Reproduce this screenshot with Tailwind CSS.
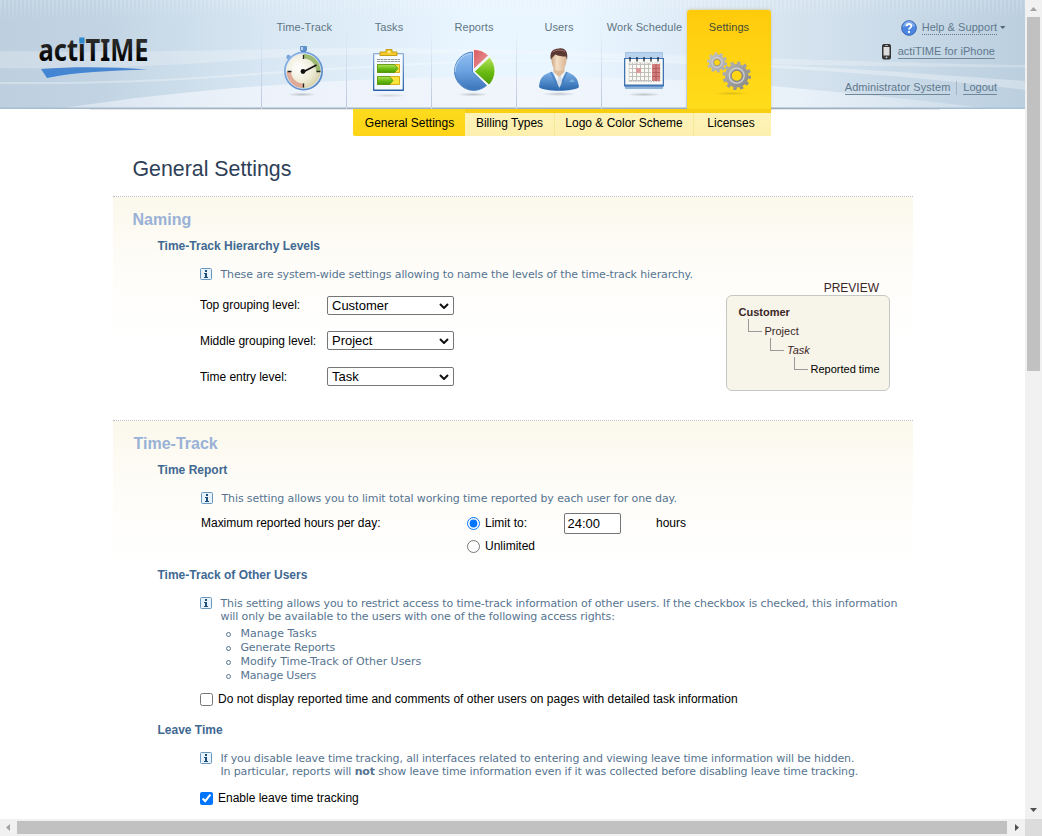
<!DOCTYPE html>
<html lang="en">
<head>
<meta charset="utf-8">
<title>actiTIME - General Settings</title>
<script src="https://cdn.jsdelivr.net/npm/@tailwindcss/browser@4"></script>
</head>
<body class="w-[1042px] h-[836px] overflow-hidden bg-white font-['Liberation_Sans',Arial,sans-serif] text-[12px] text-black grid grid-cols-[1025px_17px] grid-rows-[819px_17px]">

<div class="overflow-hidden">
  <header class="relative h-[109px] flex">
    <!-- header backdrop -->
    <svg class="absolute inset-0" width="1025" height="112" viewBox="0 0 1025 112">
      <defs>
        <linearGradient id="hb"><stop offset="0" stop-color="#bed0df"/><stop offset=".1" stop-color="#c2d4e3"/><stop offset=".26" stop-color="#d8e7f3"/><stop offset=".46" stop-color="#e9f5ff"/><stop offset=".56" stop-color="#e9f5ff"/><stop offset=".78" stop-color="#d5e3ef"/><stop offset="1" stop-color="#bbcfdf"/></linearGradient>
        <linearGradient id="hl"><stop offset="0" stop-color="#a9bfd2"/><stop offset=".25" stop-color="#a0b2c4"/><stop offset=".75" stop-color="#9aabbf"/><stop offset="1" stop-color="#a9c4da"/></linearGradient>
        <linearGradient id="fade" x1="0" x2="0" y1="0" y2="1"><stop offset="0" stop-color="#fff"/><stop offset="1" stop-color="#000"/></linearGradient>
        <pattern id="st" width="4" height="20" patternUnits="userSpaceOnUse"><rect width="2" height="20" fill="#fff" opacity=".2"/></pattern>
        <mask id="fm"><rect width="1025" height="20" fill="url(#fade)"/></mask>
        <linearGradient id="hill"><stop offset="0" stop-color="#e4ecf5" stop-opacity=".6"/><stop offset=".2" stop-color="#ecf2fa"/><stop offset=".5" stop-color="#f1f6fd"/><stop offset=".8" stop-color="#e9f1f9"/><stop offset="1" stop-color="#d5e2ed" stop-opacity=".6"/></linearGradient>
      </defs>
      <rect width="1025" height="108" fill="url(#hb)"/>
      <rect width="1025" height="20" fill="url(#st)" mask="url(#fm)"/>
      <path d="M0 51C120 53 240 50 330 48C520 47 850 63 1025 65V67.500C850 66 660 64 560 55C420 52 350 54 270 58C180 66 90 69 0 68Z" fill="#fff" opacity=".24"/>
      <path d="M0 82C130 83 200 77 270 72C360 66 450 60 530 60C700 58 850 68 1025 81V90C900 74 700 60 530 61.500C450 62 360 68 270 74C200 79 130 85 0 84Z" fill="#fff" opacity=".3"/>
      <path d="M62 108C130 98 200 90 270 85.500C380 77 470 76 540 76.500C640 77 720 82 772 86C850 93 920 100 984 108Z" fill="url(#hill)"/>
      <rect y="107.5" width="1025" height="1.5" fill="url(#hl)"/>
      <rect x="90" y="109" width="850" height="1" fill="#e8e6e4"/>
    </svg>

    <div class="relative w-[262px] pl-[36px] pt-[22px]">
      <svg class="overflow-visible" width="118" height="60" viewBox="36 22 118 60">
        <defs>
          <linearGradient id="lg" gradientUnits="userSpaceOnUse" x1="0" x2="0" y1="38" y2="61"><stop offset="0" stop-color="#2e2e2e"/><stop offset=".55" stop-color="#171717"/><stop offset="1" stop-color="#000"/></linearGradient>
          <linearGradient id="ls" x1="0" x2="0" y1="0" y2="1"><stop offset="0" stop-color="#4a86cf"/><stop offset="1" stop-color="#3e85d8"/></linearGradient>
        </defs>
        <text x="38.500" y="61" font-family="Noto Sans" font-weight="700" font-size="29.5" fill="url(#lg)" textLength="110" lengthAdjust="spacingAndGlyphs">actiTIME</text>
        <rect x="79.300" y="37.500" width="5.200" height="6" fill="#2d89cc"/>
        <path d="M41 69C75 66.500 110 67 147 69.500C110 71 75 72 47 78Z" fill="url(#ls)"/>
      </svg>
    </div>

    <nav class="relative flex text-[11px] leading-[14px] text-[#5e7585] tracking-[0.08px]">
      <a class="w-[85px] h-[109px] pr-[0.5px] flex flex-col items-center pt-[20px]">Time-Track
        <svg class="mt-[10px] mr-[1px]" width="48" height="54" viewBox="0 0 48 54">
          <defs>
            <radialGradient id="wf" cx=".35" cy=".4" r=".75"><stop offset="0" stop-color="#fff"/><stop offset=".6" stop-color="#edead5"/><stop offset="1" stop-color="#cfc99b"/></radialGradient>
            <linearGradient id="wr" x1="0" x2="1" y1="0" y2="1"><stop offset="0" stop-color="#8fb8ea"/><stop offset="1" stop-color="#4e80bf"/></linearGradient>
            <radialGradient id="sh"><stop offset="0" stop-color="#000" stop-opacity=".2"/><stop offset="1" stop-color="#000" stop-opacity="0"/></radialGradient>
          </defs>
          <ellipse cx="22" cy="50.500" rx="15" ry="2" fill="url(#sh)"/>
          <rect x="20" y="2" width="7" height="5" rx="1" fill="#5b90cb"/><path d="M21 3h2v3h-2z" fill="#b9d5f3"/><rect x="21" y="7" width="5" height="2" fill="#3e6da8"/>
          <circle cx="8.500" cy="13" r="2.200" fill="#78a6dc"/>
          <circle cx="23.500" cy="27" r="19.500" fill="url(#wr)"/><circle cx="23.500" cy="27" r="17.800" fill="#dce9f8"/><circle cx="23.500" cy="27" r="17" fill="url(#wf)"/>
          <path d="M23.500 10A17 17 0 0 1 40.500 27H36A12.500 12.500 0 0 0 23.500 14.500Z" fill="#8fb262" opacity=".85"/>
          <path d="M6.500 28A17 17 0 0 0 23.500 44V39.500A12.500 12.500 0 0 1 11 28Z" fill="#dd9f8b" opacity=".85"/>
          <path d="M23.500 11v4M23.500 39.500v4M7.500 27.500h4M36.500 27.500h4" stroke="#222" stroke-width="1.300"/>
          <path d="M22 28.500L36.500 21" stroke="#111" stroke-width="1.700"/><circle cx="23" cy="27.500" r="2.400" fill="#111"/>
        </svg>
      </a>
      <a class="w-[85px] h-[109px] pr-[1px] flex flex-col items-center pt-[20px]">Tasks
        <svg class="mt-[10px]" width="48" height="54" viewBox="0 0 48 54">
          <defs><linearGradient id="gr" x1="0" x2="0" y1="0" y2="1"><stop offset="0" stop-color="#b8e35c"/><stop offset=".55" stop-color="#69bb12"/><stop offset="1" stop-color="#4a9a06"/></linearGradient>
          <linearGradient id="cb" x1="0" x2="0" y1="0" y2="1"><stop offset="0" stop-color="#8fb1da"/><stop offset="1" stop-color="#255fa6"/></linearGradient></defs>
          <ellipse cx="24" cy="51.500" rx="19" ry="2" fill="url(#sh)" opacity=".6"/>
          <rect x="8" y="9" width="31" height="38" rx="1" fill="url(#cb)"/><rect x="9.300" y="10.300" width="28.400" height="35.200" fill="#f7fafd"/>
          <path d="M15 11.500V8h6V5.500h6V8h5v3.500z" fill="#f4cb2c" stroke="#c29708" stroke-width=".9"/><circle cx="24" cy="8" r="1.200" fill="#fff3a8"/>
          <path d="M12 15.500h23M12 17.500h23" stroke="#8b8b8b" stroke-dasharray="3 .5" stroke-width=".9"/>
          <path d="M12.500 20.500h22v8h-22zM12.500 32.500h22v8h-22z" fill="#fce43c" stroke="#d7ae15"/>
          <path d="M12.500 20.500h17l3.500 4l-3.500 4h-17z" fill="url(#gr)" stroke="#4f9512" stroke-width=".8"/>
          <path d="M12.500 32.500h12l3.500 4l-3.500 4h-12z" fill="url(#gr)" stroke="#4f9512" stroke-width=".8"/>
        </svg>
      </a>
      <a class="w-[85px] h-[109px] pr-[1px] flex flex-col items-center pt-[20px]">Reports
        <svg class="mt-[10px]" width="48" height="54" viewBox="0 0 48 54">
          <defs><linearGradient id="pb" x1="0" x2="0" y1="0" y2="1"><stop offset="0" stop-color="#94c0f3"/><stop offset=".5" stop-color="#6ba2e0"/><stop offset="1" stop-color="#3a75ba"/></linearGradient>
          <linearGradient id="pr" x1="0" x2="1" y1="0" y2="1"><stop offset="0" stop-color="#d9595f"/><stop offset="1" stop-color="#eba0a2"/></linearGradient></defs>
          <ellipse cx="23" cy="50.500" rx="16" ry="2" fill="url(#sh)"/>
          <path d="M22.500 28V8A19.200 19.200 0 1 0 36.500 41.500Z" fill="url(#pb)" stroke="#4d83c2"/>
          <path d="M21.500 9.500A18 18 0 0 0 5 28" fill="none" stroke="#c5def8" stroke-width=".8"/>
          <path d="M23.500 25.500V5.500A20 20 0 0 1 38.500 11.500Z" fill="url(#pr)" stroke="#fff" stroke-width=".8"/>
          <path d="M24.500 27.500L39.500 13A20 20 0 0 1 39 41Z" fill="url(#gr)" stroke="#fff" stroke-width=".8"/>
        </svg>
      </a>
      <a class="w-[85px] h-[109px] pr-[1px] flex flex-col items-center pt-[20px]">Users
        <svg class="mt-[10px]" width="48" height="54" viewBox="0 0 48 54">
          <defs><linearGradient id="uj" x1="0" x2="0" y1="0" y2="1"><stop offset="0" stop-color="#7eb3ea"/><stop offset="1" stop-color="#2865ab"/></linearGradient>
          <linearGradient id="uf" x1="0" x2="1"><stop offset="0" stop-color="#c9a37f"/><stop offset=".35" stop-color="#f5dfc6"/><stop offset="1" stop-color="#d9b491"/></linearGradient></defs>
          <ellipse cx="24" cy="50" rx="17" ry="2" fill="url(#sh)"/>
          <path d="M4 43C5 33 8 31 17 27.500L24 34L31 27.500C40 31 43 34 44 43C39 48 9 48 4 43Z" fill="url(#uj)"/>
          <path d="M17.500 27L24 42L31 27Z" fill="#f4f7fa"/><path d="M23 31h3l1 9l-2.500 4l-2-4z" fill="#d5dde6"/>
          <path d="M16 28l8 18M32 28l-8 18" stroke="#3f77b7" stroke-width=".9"/>
          <path d="M18.500 22h11v6l-5.500 5l-5.500-5z" fill="#dcbc9a"/>
          <path d="M16.500 13C16.500 7 31.500 7 31.500 13C32 21 29 27 24 27S16 21 16.500 13Z" fill="url(#uf)"/>
          <path d="M16 16C14 8 18 4.500 24 4.500C30 3.500 33.500 8 32 16L31 12.500C27 12.500 23 12 20.500 10.500C19 12 17 13 16 16Z" fill="#5c3833"/>
          <path d="M18 8C21 5.500 27 5.500 30 7.500" fill="none" stroke="#a37a70"/>
          <path d="M34 38l3-3l3 3z" fill="#8fc0ea" opacity=".7"/>
        </svg>
      </a>
      <a class="w-[85px] h-[109px] flex flex-col items-center pt-[20px] whitespace-nowrap">Work Schedule
        <svg class="mt-[10px] mr-[1px]" width="48" height="54" viewBox="0 0 48 54">
          <ellipse cx="24" cy="50.500" rx="17" ry="2" fill="url(#sh)"/>
          <rect x="5" y="8" width="38" height="37" rx="1" fill="#8db2da"/><rect x="5.500" y="8.500" width="37" height="6.500" fill="#b9d2ee"/>
          <rect x="4" y="14" width="40" height="28.500" fill="#3f74b3"/><rect x="5.300" y="15" width="37.400" height="25.500" fill="#fbfaf5"/>
          <path d="M10 13v4.500M17 13v4.500M24 13v4.500M31 13v4.500M38 13v4.500" stroke="#18283c" stroke-width="1.300"/>
          <path d="M9 20.500h22M9 24.500h22M9 28.500h22M9 32.500h22M9 36.500h22M12.500 19v18M16.500 19v18M20.500 19v18M24.500 19v18M28.500 19v18" stroke="#c2c0bc"/>
          <rect x="9" y="19" width="31" height="18.500" fill="none" stroke="#c5c3bf" stroke-dasharray="1.500 1"/>
          <rect x="16" y="24" width="5" height="5" fill="#d89a9a"/>
          <rect x="32" y="20" width="8" height="17" fill="#d17f7e"/><path d="M32 24.500h8M32 28.500h8M32 32.500h8M36 20v17" stroke="#b25257" stroke-width=".8"/>
        </svg>
      </a>
      <a class="w-[84px] mt-[10px] h-[103px] flex flex-col items-center pt-[10px] rounded-t-[3px] bg-linear-to-b from-[#ffcb0b] to-[#ffdd1a] text-[#454b39] shadow-[0_-1px_3px_#b99a2850]">Settings
        <svg class="mt-[10px]" width="48" height="54" viewBox="0 0 48 54">
          <defs><linearGradient id="gg" gradientUnits="userSpaceOnUse" x1="4" x2="44" y1="8" y2="46"><stop offset="0" stop-color="#c2c2c2"/><stop offset=".5" stop-color="#a9a9a9"/><stop offset="1" stop-color="#858585"/></linearGradient></defs>
          <ellipse cx="26" cy="49.500" rx="18" ry="1.700" fill="url(#sh)" opacity=".7"/>
          <g fill="none" stroke="url(#gg)">
            <circle cx="12" cy="18.500" r="5.700" stroke-width="5"/><circle cx="12" cy="18.500" r="8.800" stroke-width="2.800" stroke-dasharray="2.700 2.829"/>
            <circle cx="31.700" cy="31.700" r="8.500" stroke-width="6.500"/><circle cx="31.700" cy="31.700" r="12.800" stroke-width="3" stroke-dasharray="3.350 3.352"/>
          </g>
          <circle cx="31.700" cy="31.700" r="7.500" fill="none" stroke="#d2d2d2" stroke-width="1.200"/><circle cx="31.700" cy="31.700" r="5.400" fill="none" stroke="#777" stroke-width=".7"/>
          <circle cx="12" cy="18.500" r="5" fill="none" stroke="#dcdcdc" stroke-width=".8"/><circle cx="12" cy="18.500" r="3.300" fill="none" stroke="#808080" stroke-width=".6"/>
        </svg>
      </a>
      <!-- column separators -->
      <svg class="absolute left-[-1px] top-0 pointer-events-none" width="512" height="109"><defs><linearGradient id="vs" x1="0" x2="0" y1="0" y2="1"><stop offset=".25" stop-color="#c3cee4" stop-opacity="0"/><stop offset="1" stop-color="#bcc8e0"/></linearGradient></defs>
        <g fill="url(#vs)"><rect width="1" height="107"/><rect x="85" width="1" height="107"/><rect x="170" width="1" height="107"/><rect x="255" width="1" height="107"/><rect x="340" width="1" height="107"/><rect x="425" width="1" height="107"/></g>
        <path d="M0 107h1v2h-1zM85 107h1v2h-1zM170 107h1v2h-1zM255 107h1v2h-1zM340 107h1v2h-1z" fill="#d4d8dd"/></svg>
    </nav>

    <div class="relative ml-auto pr-[28px] pt-[20px] flex flex-col items-end text-[11px] leading-[13px] text-[#60788c]">
      <div class="flex items-center h-[16px] mr-[-9px]">
        <svg class="mr-[5px]" width="16" height="16" viewBox="0 0 16 16"><circle cx="8" cy="8" r="7.300" fill="#4a86e0" stroke="#3a66b4"/><path d="M2 7a6 6 0 0 1 12 0c-4-2-8-2-12 0z" fill="#8db5f2" opacity=".8"/><path d="M5.600 6.200C5.700 3.300 10.400 3.300 10.400 6C10.400 7.700 8 7.600 8 9.600" fill="none" stroke="#fff" stroke-width="1.800"/><circle cx="8" cy="12" r="1.150" fill="#fff"/></svg>
        <a class="border-b border-dotted border-[#60788c] tracking-[0.05px]">Help &amp; Support</a>
        <svg class="ml-[3px]" width="6" height="4" viewBox="0 0 6 4"><path d="M0 0h5.500L2.750 3z" fill="#52697c"/></svg>
      </div>
      <div class="flex items-center mt-[8px] h-[16px] mr-[2px]">
        <svg class="mr-[7px]" width="9" height="16" viewBox="0 0 9 16"><rect x=".5" y=".5" width="8" height="14.500" rx="1.200" fill="#383838" stroke="#333"/><rect x="1.500" y="3" width="6" height="8.500" fill="#dcdcdc"/><path d="M3 1.500h3" stroke="#aaa"/><circle cx="4.500" cy="13.300" r=".9" fill="#ddd"/></svg>
        <a class="border-b border-[#71879a] tracking-[0.04px]">actiTIME for iPhone</a>
      </div>
      <div class="flex items-center mt-[20px] h-[16px]">
        <a class="border-b border-[#71879a] tracking-[0.05px]">Administrator System</a>
        <span class="w-[1px] h-[14px] bg-[#a9b3bb] mx-[6px]"></span>
        <a class="border-b border-[#71879a]">Logout</a>
      </div>
    </div>
  </header>

  <div class="relative ml-[353px] w-[418px] h-[27px] pt-[4px] flex rounded-b-[3px] bg-linear-to-b from-[#f9cf12] from-[4px] to-[#ffd91b] to-[4px] leading-[20px] overflow-hidden text-center">
    <a class="w-[112px] pl-[1px] -mt-[4px] pt-[4px] bg-linear-to-b from-[#fddb1c] to-[#ffd418]">General Settings</a>
    <a class="w-[90px] border-r border-[#f8e69a] bg-linear-to-b from-[#fef2b8] to-[#fdf0ae]">Billing Types</a>
    <a class="w-[139px] border-r border-[#f8e69a] bg-linear-to-b from-[#fef2b8] to-[#fdf0ae]">Logo &amp; Color Scheme</a>
    <a class="w-[77px] pr-[3px] bg-linear-to-b from-[#fef2b8] to-[#fdf0ae]">Licenses</a>
  </div>

  <main class="ml-[113px] w-[800px]">
    <h1 class="h-[60px] pt-[21px] pl-[19.5px] text-[21.33px] leading-[24px] text-[#2e4057]">General Settings</h1>

    <section class="h-[224px] border-t border-dotted border-[#c0c0c0] bg-[linear-gradient(#fbf8ec,#fefdfa_80px,#ffffff_150px)] flex">
      <div class="w-[613px] pt-[10px]">
        <h2 class="h-[26px] leading-[26px] pl-[19.5px] text-[16px] font-bold text-[#9ab1d6]">Naming</h2>
        <h3 class="h-[26px] leading-[26px] pl-[44.5px] font-bold text-[#3f6992]">Time-Track Hierarchy Levels</h3>
        <p class="flex items-center h-[30px] pl-[87px] text-[11px] tracking-[-0.125px] font-['DejaVu_Sans',sans-serif] text-[#567490] whitespace-nowrap">
          <svg class="mr-[8.5px] shrink-0" width="12" height="12" viewBox="0 0 12 12"><rect x=".5" y=".5" width="11" height="11" rx="1" fill="#e6f3fc" stroke="#6b97bd"/><path d="M5 2h2v2h-2zM4 5h3v4h1v1h-4v-1h1v-3h-1z" fill="#1f4e78"/></svg><span class="pt-[2px]">These are system-wide settings allowing to name the levels of the time-track hierarchy.</span></p>
        <div class="flex items-center h-[33px] pl-[87px]"><span class="w-[127px] pb-[2px] tracking-[-0.03px]">Top grouping level:</span>
          <span class="w-[127px] h-[19px] border border-[#767676] rounded-[2px] bg-white flex items-center justify-between pl-[4px] pr-[4px] text-[13px] leading-[17px]">Customer<svg width="10" height="6" viewBox="0 0 10 6"><path d="M1 1l4 4l4-4" fill="none" stroke="#111" stroke-width="2"/></svg></span></div>
        <div class="flex items-center h-[37px] pl-[87px]"><span class="w-[127px] tracking-[-0.03px]">Middle grouping level:</span>
          <span class="w-[127px] h-[19px] border border-[#767676] rounded-[2px] bg-white flex items-center justify-between pl-[4px] pr-[4px] text-[13px] leading-[17px]">Project<svg width="10" height="6" viewBox="0 0 10 6"><path d="M1 1l4 4l4-4" fill="none" stroke="#111" stroke-width="2"/></svg></span></div>
        <div class="flex items-center h-[35px] pl-[87px]"><span class="w-[127px] tracking-[-0.03px]">Time entry level:</span>
          <span class="w-[127px] h-[19px] border border-[#767676] rounded-[2px] bg-white flex items-center justify-between pl-[4px] pr-[4px] text-[13px] leading-[17px]">Task<svg width="10" height="6" viewBox="0 0 10 6"><path d="M1 1l4 4l4-4" fill="none" stroke="#111" stroke-width="2"/></svg></span></div>
      </div>
      <div class="w-[164px] pt-[84px] text-[#3b2626]">
        <div class="h-[14px] leading-[14px] text-right pr-[11px]">PREVIEW</div>
        <div class="h-[96px] rounded-[6px] border border-[#c6c6c4] bg-[#f7f4e9] pt-[7px] pl-[11.5px] text-[11px] leading-[19px]">
          <div class="font-bold">Customer</div>
          <div class="flex pl-[9.500px]"><i class="w-[14px] h-[13px] -mt-[3px] mr-[2.5px] border-l border-b border-[#999]"></i>Project</div>
          <div class="flex pl-[31.500px]"><i class="w-[14px] h-[13px] -mt-[3px] mr-[3px] border-l border-b border-[#999]"></i><em>Task</em></div>
          <div class="flex pl-[55.500px] text-black whitespace-nowrap"><i class="w-[14px] h-[13px] -mt-[3px] mr-[2.5px] border-l border-b border-[#999]"></i>Reported time</div>
        </div>
      </div>
    </section>

    <section class="border-t border-dotted border-[#c0c0c0] bg-[linear-gradient(#fbf8ec,#fefdfa_80px,#ffffff_150px)] pt-[10px]">
      <h2 class="h-[26px] leading-[26px] pl-[20.5px] text-[16px] font-bold text-[#9ab1d6]">Time-Track</h2>
      <h3 class="h-[26px] leading-[26px] pl-[44.5px] font-bold text-[#3f6992]">Time Report</h3>
      <p class="flex items-center h-[30px] pl-[88px] text-[11px] tracking-[-0.12px] font-['DejaVu_Sans',sans-serif] text-[#567490] whitespace-nowrap">
        <svg class="mr-[8.5px] shrink-0" width="12" height="12" viewBox="0 0 12 12"><rect x=".5" y=".5" width="11" height="11" rx="1" fill="#e6f3fc" stroke="#6b97bd"/><path d="M5 2h2v2h-2zM4 5h3v4h1v1h-4v-1h1v-3h-1z" fill="#1f4e78"/></svg><span class="pt-[2px]">This setting allows you to limit total working time reported by each user for one day.</span></p>
      <div class="flex items-center h-[21px] pl-[88px]">
        <span class="w-[266px] pb-[2px] tracking-[-0.02px]">Maximum reported hours per day:</span>
        <input type="radio" name="lim" checked class="w-[13px] h-[13px] m-0 mr-[5px]"><span class="w-[79px] pb-[2px]">Limit to:</span>
        <span class="w-[57px] h-[21px] border border-[#767676] rounded-[2px] bg-white pl-[2.5px] text-[13px] leading-[19px]">24:00</span>
        <span class="ml-[35px] pb-[2px]">hours</span>
      </div>
      <div class="flex items-center h-[25px] pl-[354px]"><input type="radio" name="lim" class="w-[13px] h-[13px] m-0 mr-[5px]"><span class="pb-[2px]">Unlimited</span></div>
      <h3 class="h-[32px] leading-[32px] pl-[44.5px] font-bold text-[#3f6992]">Time-Track of Other Users</h3>
      <div class="flex pl-[87px] pt-[6px] h-[99px] text-[11px] tracking-[-0.12px] leading-[13px] font-['DejaVu_Sans',sans-serif] text-[#567490] whitespace-nowrap">
        <svg class="mr-[8.5px] shrink-0" width="12" height="12" viewBox="0 0 12 12"><rect x=".5" y=".5" width="11" height="11" rx="1" fill="#e6f3fc" stroke="#6b97bd"/><path d="M5 2h2v2h-2zM4 5h3v4h1v1h-4v-1h1v-3h-1z" fill="#1f4e78"/></svg>
        <div><span class="tracking-[-0.117px]">This setting allows you to restrict access to time-track information of other users. If the checkbox is checked, this information</span><br>will only be available to the users with one of the following access rights:
          <ul class="mt-[4px] leading-[14px] tracking-[-0.03px]">
            <li class="flex items-center"><i class="w-[5px] h-[5px] border border-[#567490] rounded-full ml-[5.500px] mr-[9.500px]"></i>Manage Tasks</li>
            <li class="flex items-center"><i class="w-[5px] h-[5px] border border-[#567490] rounded-full ml-[5.500px] mr-[9.500px]"></i><span class="tracking-[-0.15px]">Generate Reports</span></li>
            <li class="flex items-center"><i class="w-[5px] h-[5px] border border-[#567490] rounded-full ml-[5.500px] mr-[9.500px]"></i>Modify Time-Track of Other Users</li>
            <li class="flex items-center"><i class="w-[5px] h-[5px] border border-[#567490] rounded-full ml-[5.500px] mr-[9.500px]"></i><span class="tracking-[-0.2px]">Manage Users</span></li>
          </ul>
        </div>
      </div>
      <label class="flex items-center h-[18px] pl-[87px]"><input type="checkbox" class="w-[13px] h-[13px] m-0 mr-[5px]">Do not display reported time and comments of other users on pages with detailed task information</label>
      <h3 class="h-[43px] leading-[44px] pl-[44.5px] font-bold text-[#3f6992]">Leave Time</h3>
      <div class="flex pl-[87px] pt-[1px] h-[38px] text-[11px] tracking-[-0.143px] leading-[13px] font-['DejaVu_Sans',sans-serif] text-[#567490] whitespace-nowrap">
        <svg class="mr-[8.5px] shrink-0" width="12" height="12" viewBox="0 0 12 12"><rect x=".5" y=".5" width="11" height="11" rx="1" fill="#e6f3fc" stroke="#6b97bd"/><path d="M5 2h2v2h-2zM4 5h3v4h1v1h-4v-1h1v-3h-1z" fill="#1f4e78"/></svg>
        <div>If you disable leave time tracking, all interfaces related to entering and viewing leave time information will be hidden.<br>In particular, reports will <b>not</b> show leave time information even if it was collected before disabling leave time tracking.</div>
      </div>
      <label class="flex items-center h-[18px] pl-[87px]"><input type="checkbox" checked class="w-[13px] h-[13px] m-0 mr-[5px]">Enable leave time tracking</label>
    </section>
  </main>
</div>

<div class="bg-[#f1f1f1] flex flex-col items-center">
  <svg width="17" height="17" viewBox="0 0 17 17"><path d="M5 11h7L8.500 7z" fill="#a3a3a3"/></svg>
  <div class="w-[13px] h-[354px] bg-[#c1c1c1]"></div>
  <svg class="mt-auto" width="17" height="17" viewBox="0 0 17 17"><path d="M5 6h7L8.500 10z" fill="#505050"/></svg>
</div>
<div class="bg-[#f1f1f1] flex items-center">
  <svg width="17" height="17" viewBox="0 0 17 17"><path d="M10 5v7L6 8.500z" fill="#a3a3a3"/></svg>
  <div class="w-[990px] h-[13px] bg-[#c1c1c1]"></div>
  <svg class="ml-auto" width="17" height="17" viewBox="0 0 17 17"><path d="M7 5v7l4-3.500z" fill="#505050"/></svg>
</div>
<div class="bg-[#dcdcdc]"></div>
</body>
</html>
